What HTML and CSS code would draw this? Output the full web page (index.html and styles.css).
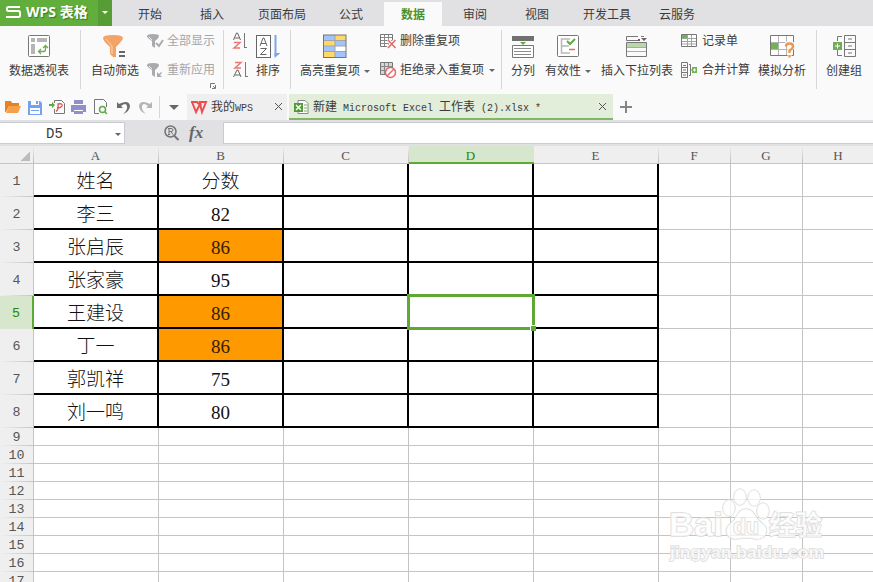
FILE: index.html
```html
<!DOCTYPE html>
<html lang="zh-CN">
<head>
<meta charset="utf-8">
<title>WPS 表格</title>
<link rel="stylesheet" href="styles.css">
</head>
<body>
<div class="app">
  <header class="menubar">
    <div class="brand">
      <svg width="15" height="12" viewBox="0 0 15 12" fill="none" stroke="#fff" stroke-width="2"><path d="M14 1H2.5Q1 1 1 2.5V3.500Q1 5 2.500 5H12.500Q14 5 14 6.500V9.500Q14 11 12.500 11H0"/></svg>
      <span>WPS 表格</span>
    </div>
    <div class="brand-drop"><i class="caret light"></i></div>
    <nav class="menu">
      <a class="w-start">开始</a><a class="w-insert">插入</a><a class="w-layout">页面布局</a><a class="w-formula">公式</a><a class="current">数据</a><a class="w-review">审阅</a><a class="w-view">视图</a><a class="w-dev">开发工具</a><a class="w-cloud">云服务</a>
    </nav>
  </header>

  <section class="ribbon">
    <div class="group g-pivot">
      <div class="tool">
        <svg width="24" height="24" viewBox="0 0 24 24" fill="none"><rect x="1.500" y="1.500" width="21" height="21" rx="1" fill="#fff" stroke="#777"/><path d="M4 4h4v4H4zM10 4h10v4H10zM4 10h4v10H4z" fill="#b5b5b7"/><path d="M12 17.500h4.500Q18.500 17.500 18.500 15.500V12M14 15l-2.500 2.500L14 20M16 14l2.500-2.500L21 14" stroke="#6aad4c" stroke-width="1.300"/></svg>
        <span>数据透视表</span>
      </div>
    </div>
    <div class="group g-filter">
      <div class="tool">
        <svg width="24" height="24" viewBox="0 0 24 24"><path d="M0 4Q0 1 10 1T20 4Q20 6 13 13V23H10L7 20V13Q0 7 0 4Z" fill="#f2a365"/><path d="M3 5l6 7v8" fill="none" stroke="#fbd5b5"/><path d="M16 17h6v2h-6zM16 21h6v2h-6z" fill="#666"/></svg>
        <span>自动筛选</span>
      </div>
      <div class="stack muted">
        <div class="mini"><svg width="17" height="16" viewBox="0 0 17 16"><path d="M0 3Q0 1 6 1T12 3Q12 5 8 8V15L5 13V8Q0 5 0 3Z" fill="#a9aaad"/><path d="M2 4l3 3" stroke="#eee"/><path d="M9 10l3 3 4-6" fill="none" stroke="#a9aaad" stroke-width="2"/></svg><span>全部显示</span></div>
        <div class="mini"><svg width="17" height="16" viewBox="0 0 17 16"><path d="M0 3Q0 1 6 1T12 3Q12 5 8 8V15L5 13V8Q0 5 0 3Z" fill="#a9aaad"/><path d="M2 4l3 3" stroke="#eee"/><path d="M10 10v5h5l-2-2 2-2-1-1-2 2z" fill="#a9aaad"/></svg><span>重新应用</span></div>
      </div>
      <svg class="launcher" width="6" height="6" viewBox="0 0 6 6" fill="none" stroke="#777"><path d="M.5 5V.5H5M5.500 2v3.500H2M3 3l2 2"/></svg>
    </div>
    <div class="group g-sort">
      <div class="stack narrow">
        <svg width="16" height="18" viewBox="0 0 16 18" fill="none"><path d="M1.500 8L4.500 1h1L8.500 8M2.500 6h5" stroke="#666"/><path d="M2 10.500h6l-6 5.500h6" stroke="#ed7777" stroke-width="1.500"/><path d="M12.500 1v15M13 15.500h2" stroke="#777"/></svg>
        <svg width="16" height="18" viewBox="0 0 16 18" fill="none"><path d="M3 1.500h6L3 7h6" stroke="#ed7777" stroke-width="1.500"/><path d="M1.500 16L5 9h1l3 7M3 14h5" stroke="#666"/><path d="M13.500 1v15M14 15.500h2" stroke="#777"/></svg>
      </div>
      <div class="tool">
        <svg width="24" height="24" viewBox="0 0 24 24" fill="none"><rect x=".5" y="1.500" width="14" height="22" fill="#fff" stroke="#666"/><path d="M4 12L7 4h1l3 8M5 9.500h5M4.500 14.500h6l-6 6h6" stroke="#666"/><path d="M19.500 1v21" stroke="#7ea6ec" stroke-width="2"/><path d="M18.500 24v-5h6z" fill="#7ea6ec"/></svg>
        <span>排序</span>
      </div>
    </div>
    <div class="group g-dup">
      <div class="tool">
        <svg width="24" height="24" viewBox="0 0 24 24"><path d="M1 1h22v22H1z" fill="#a3c4fa"/><path d="M12 1h11v5H12zM1 7h11v5H1zM1 18h11v5H1z" fill="#ffd868"/><path d="M12 12h11v5H12z" fill="#fff"/><path d="M1 6.500h22M1 12h22M1 17.500h22M12 1v22" stroke="#a2a5a9" fill="none"/><rect x=".5" y="1" width="22.500" height="22.500" fill="none" stroke="#757575"/></svg>
        <span>高亮重复项<i class="caret"></i></span>
      </div>
      <div class="stack">
        <div class="mini"><svg width="16" height="16" viewBox="0 0 16 16" fill="none"><path d="M.5 1.500h12v12H.5z" fill="#fff" stroke="#777"/><path d="M1 4.500h11M1 7.500h11M1 10.500h11M4.500 2v11M8.500 2v11" stroke="#888"/><path d="M8 7l7.500 8M15.500 7L8 15" stroke="#fafafa" stroke-width="4"/><path d="M8 7l7.500 8M15.500 7L8 15" stroke="#e56767" stroke-width="1.500"/></svg><span>删除重复项</span></div>
        <div class="mini"><svg width="16" height="16" viewBox="0 0 16 16" fill="none"><path d="M.5.500h12v12H.5z" fill="#d6d6d6" stroke="#777"/><path d="M1 4.500h11M1 8.500h11M4.500 1v11M8.500 1v11" stroke="#888"/><circle cx="10.500" cy="10.500" r="5" fill="#fff" stroke="#e56767" stroke-width="1.500"/><path d="M7 14l7-7" stroke="#e56767" stroke-width="1.500"/></svg><span>拒绝录入重复项</span><i class="caret"></i></div>
      </div>
    </div>
    <div class="group g-data">
      <div class="tool">
        <svg width="24" height="24" viewBox="0 0 24 24" fill="none"><path d="M1 2h22v5H1z" fill="#707070"/><path d="M9 8h6l-3 3z" fill="#5faa43"/><path d="M1.500 11.500h21v12h-21z" fill="#fff" stroke="#777"/><path d="M3 14.500h17M3 17.500h17M3 20.500h17" stroke="#8c8c8c"/></svg>
        <span>分列</span>
      </div>
      <div class="tool t-valid">
        <svg width="24" height="24" viewBox="0 0 24 24" fill="none"><rect x="1.500" y="1.500" width="21" height="21" rx="1" fill="#fff" stroke="#777"/><path d="M14 5H5.500v14H14M6 12h7" stroke="#b8b8b8" stroke-width="1.500"/><path d="M11 7l3 3 5-5" stroke="#5faa43" stroke-width="2"/><path d="M13 15.500h6" stroke="#e56767" stroke-width="1.500"/></svg>
        <span>有效性<i class="caret"></i></span>
      </div>
      <div class="tool t-list">
        <svg width="24" height="24" viewBox="0 0 24 24" fill="none"><path d="M13 2.500H1.500v4h12M16 2.500h3M1.500 8.500h20v14h-20z" stroke="#777"/><path d="M2 9h19v4H2z" fill="#b9d7a9"/><path d="M2 13.500h19M2 17.500h19" stroke="#aaa"/><path d="M16 4h6l-3 3zM13 5h2v2h-2z" fill="#666"/></svg>
        <span>插入下拉列表</span>
      </div>
      <div class="stack">
        <div class="mini"><svg width="17" height="16" viewBox="0 0 17 16" fill="none"><path d="M.5 1.500h15v12H.5z" fill="#fff" stroke="#777"/><path d="M1 2h5v3H1z" fill="#6fb354"/><path d="M1 5.500h14M1 8.500h14M1 11h14M6.500 2v11M10.500 2v11" stroke="#a3a3a3"/></svg><span>记录单</span></div>
        <div class="mini"><svg width="17" height="16" viewBox="0 0 17 16" fill="none"><path d="M.5.500h6v15h-6zM1 5.500h5M1 10.500h5" stroke="#777"/><path d="M2 3.500h3M2 8h3M2 13h3M8 2.500h1.500v11H8M9 8h3" stroke="#777"/><path d="M11 5h5v6h-5z" fill="#6fb354"/><path d="M12 8h3M13.500 6.500v3" stroke="#fff"/></svg><span>合并计算</span></div>
      </div>
      <div class="tool t-what">
        <svg width="25" height="24" viewBox="0 0 25 24" fill="none"><path d="M.5 1.500h23v20H.5z" fill="#fff" stroke="#777"/><path d="M1 8.500h22M1 15.500h22M8.500 2v19M16.500 2v19" stroke="#b3b3b3"/><path d="M1 9h7v6H1z" fill="#6fb354"/><path d="M16 12q0-3 3.500-3t3.500 3q0 2-3.500 4v3M19.500 21v3" stroke="#fafafa" stroke-width="4"/><path d="M16 12.500q0-3 3.500-3t3.500 3q0 2-3.500 4v2.500M19.500 21v2.500" stroke="#ef974f" stroke-width="2.400"/></svg>
        <span>模拟分析</span>
      </div>
    </div>
    <div class="group g-create">
      <div class="tool">
        <svg width="24" height="24" viewBox="0 0 24 24" fill="none"><path d="M12.500 1.500h11v21h-11zM13 8.500h10M13 15.500h10M16 5h4M16 12h4M16 19h4M10 2.500H5.500V7M5.500 16v5.500H10" stroke="#777"/><path d="M1 8h9v8H1z" fill="#6fae55"/><path d="M3 12h5M5.500 9.500v5" stroke="#fff"/></svg>
        <span>创建组</span>
      </div>
    </div>
  </section>

  <section class="docbar">
    <div class="quick">
      <svg width="16" height="16" viewBox="0 0 16 16"><path d="M0 2h6l1 2h7v3H4L1 13H0z" fill="#e9821d"/><path d="M4 7h12l-3 7H1z" fill="#f5a04a"/></svg>
      <svg class="q-save" width="14" height="15" viewBox="0 0 14 15"><path d="M0 1h12l2 2v12H0z" fill="#75a1ee"/><path d="M3 1h8v4H3zM2 8h10v6H2z" fill="#fff"/><path d="M8 1h2v3H8zM3 10h8v1H3z" fill="#75a1ee"/></svg>
      <svg class="q-pdf" width="17" height="16" viewBox="0 0 17 16" fill="none"><path d="M5.500 4V1.500h7l3 3v10h-10V10" stroke="#777"/><path d="M0 5h3V3l3 3-3 3V7H0z" fill="#5ca942"/><path d="M7 12.500q3-2 2-7.500 5-1 4 2-1 2-5 2" stroke="#df5555" stroke-width="1.300"/></svg>
      <svg class="q-print" width="15" height="16" viewBox="0 0 15 16"><path d="M3 1h9v4H3zM0 6h15v7h-3v-2H3v2H0zM3 12h9v3H3z" fill="#9090c9"/><path d="M3 5h9v1H3zM4 11h7v1H4z" fill="#fff"/></svg>
      <svg class="q-preview" width="14" height="16" viewBox="0 0 14 16" fill="none"><path d="M5 14.500H.5v-14h9l3 3V8" stroke="#777"/><circle cx="8.500" cy="10.500" r="3" stroke="#61a849" stroke-width="1.500"/><path d="M11 13l2 2" stroke="#61a849" stroke-width="1.500"/></svg>
      <svg class="q-undo" width="13" height="15" viewBox="0 0 13 15"><path d="M0 2v6h6L4 6q5-4 6 0 1 4-4 8 7-3 7-8Q12-1 2 4z" fill="#6c6c6c"/></svg>
      <svg class="q-redo" width="13" height="15" viewBox="0 0 13 15"><path d="M13 2v6H7l2-2Q4 2 3 6q-1 4 4 8-7-3-7-8Q1-1 11 4z" fill="#b4b4b6"/></svg>
      <i class="divider"></i><i class="caret large"></i>
    </div>
    <div class="doc home">
      <svg width="16" height="13" viewBox="0 0 16 13" fill="none" stroke="#ed4e50" stroke-width="2"><path d="M0 1h6l2 2M1 1l4 10 4-8 2 8 4-10H9l1 4"/></svg>
      <span>我的<span class="latin">WPS</span></span>
      <svg class="close" width="9" height="9" viewBox="0 0 9 9" stroke="#555"><path d="M1 0l7 7M8 0L1 7"/></svg>
    </div>
    <div class="doc active">
      <svg width="15" height="15" viewBox="0 0 15 15" fill="none"><path d="M4 .5h7l3 3v10H4z" fill="#fff" stroke="#888"/><path d="M0 3h9v9H0z" fill="#4e9b35"/><path d="M2 5l5 5M7 5l-5 5" stroke="#fff" stroke-width="1.500"/><path d="M10 5h3M10 8h3M10 11h3" stroke="#75ad60"/></svg>
      <span>新建<span class="latin"> Microsoft Excel </span>工作表<span class="latin"> (2).xlsx *</span></span>
      <svg class="close" width="9" height="9" viewBox="0 0 9 9" stroke="#555"><path d="M1 0l7 7M8 0L1 7"/></svg>
    </div>
    <svg class="plus" width="12" height="12" viewBox="0 0 12 12" fill="#858587"><path d="M5 0h2v5h5v2H7v5H5V7H0V5h5z"/></svg>
  </section>

  <section class="formula">
    <div class="namebox"><span>D5</span><i class="caret"></i></div>
    <div class="fx">
      <svg width="15" height="16" viewBox="0 0 15 16" fill="none" stroke="#737373"><circle cx="6.500" cy="6.500" r="5.500" stroke-width="1.500"/><path d="M10.500 11l4 4" stroke-width="2"/><path d="M5 9.500v-6h2q2 0 2 1.500T7 6.500H5M7 6.500l2 3M4 3.500h2M4 9.500h2"/></svg>
      <em>fx</em>
    </div>
    <div class="input"></div>
  </section>

  <main class="sheet">
    <div class="row heads"><b class="corner"></b><b>A</b><b>B</b><b>C</b><b class="picked">D</b><b>E</b><b>F</b><b>G</b><b>H</b></div>
    <div class="row data"><b>1</b><i>姓名</i><i>分数</i><i></i><i></i><i></i><i></i><i></i><i></i></div>
    <div class="row data"><b>2</b><i>李三</i><i>82</i><i></i><i></i><i></i><i></i><i></i><i></i></div>
    <div class="row data"><b>3</b><i>张启辰</i><i class="dup">86</i><i></i><i></i><i></i><i></i><i></i><i></i></div>
    <div class="row data"><b>4</b><i>张家豪</i><i>95</i><i></i><i></i><i></i><i></i><i></i><i></i></div>
    <div class="row data"><b class="picked">5</b><i>王建设</i><i class="dup">86</i><i></i><i class="cursor"></i><i></i><i></i><i></i><i></i></div>
    <div class="row data"><b>6</b><i>丁一</i><i class="dup">86</i><i></i><i></i><i></i><i></i><i></i><i></i></div>
    <div class="row data"><b>7</b><i>郭凯祥</i><i>75</i><i></i><i></i><i></i><i></i><i></i><i></i></div>
    <div class="row data"><b>8</b><i>刘一鸣</i><i>80</i><i></i><i></i><i></i><i></i><i></i><i></i></div>
    <div class="row"><b>9</b><i></i><i></i><i></i><i></i><i></i><i></i><i></i><i></i></div>
    <div class="row"><b>10</b><i></i><i></i><i></i><i></i><i></i><i></i><i></i><i></i></div>
    <div class="row"><b>11</b><i></i><i></i><i></i><i></i><i></i><i></i><i></i><i></i></div>
    <div class="row"><b>12</b><i></i><i></i><i></i><i></i><i></i><i></i><i></i><i></i></div>
    <div class="row"><b>13</b><i></i><i></i><i></i><i></i><i></i><i></i><i></i><i></i></div>
    <div class="row"><b>14</b><i></i><i></i><i></i><i></i><i></i><i></i><i></i><i></i></div>
    <div class="row"><b>15</b><i></i><i></i><i></i><i></i><i></i><i></i><i></i><i></i></div>
    <div class="row"><b>16</b><i></i><i></i><i></i><i></i><i></i><i></i><i></i><i></i></div>
    <div class="row"><b>17</b><i></i><i></i><i></i><i></i><i></i><i></i><i></i><i></i></div>
  </main>

  <svg class="watermark" width="165" height="84" viewBox="0 0 165 84">
    <g class="paw"><ellipse cx="85" cy="12" rx="6" ry="8"/><ellipse cx="99" cy="13" rx="6" ry="8"/><ellipse cx="74" cy="23" rx="6" ry="8"/><ellipse cx="108" cy="26" rx="6" ry="8"/><path d="M91 24C82 24 83 33 76 38C68 44 71 54 81 54Q91 52 101 54C112 54 115 44 107 38C99 33 100 24 91 24Z"/></g>
    <text class="name" x="14" y="51" textLength="54" lengthAdjust="spacingAndGlyphs">Bai</text>
    <text class="du" x="78" y="49" textLength="26" lengthAdjust="spacingAndGlyphs">du</text>
    <text class="cn" x="114" y="50" textLength="53" lengthAdjust="spacingAndGlyphs">经验</text>
    <text class="url" x="15" y="73" textLength="154" lengthAdjust="spacingAndGlyphs">jingyan.baidu.com</text>
  </svg>
</div>
</body>
</html>
```
FILE: styles.css
```css
*, *::before, *::after { box-sizing: border-box; }
body { margin: 0; }
.app {
  position: relative;
  width: 873px;
  height: 582px;
  overflow: hidden;
  display: flex;
  flex-direction: column;
  background: #fff;
  color: #3b3b3b;
  font: 12px/16px "Liberation Sans", "Noto Sans CJK SC", sans-serif;
  white-space: nowrap;
}
svg { display: block; flex: none; overflow: visible; }
.caret {
  display: block;
  flex: none;
  border: 3px solid transparent;
  border-top-color: #666;
  border-bottom: 0;
}
.caret.light { border-top-color: #fff; }
.caret.large { border-width: 5px 5px 0; }

/* menu */
.menubar { display: flex; flex: none; height: 26px; background: #e1e1e4; }
.brand {
  display: flex;
  align-items: center;
  gap: 5px;
  width: 98px;
  padding: 0 0 2px 6px;
  background: #61ae3d;
  color: #fff;
  font: bold 14px/18px "Open Sans", "Noto Sans CJK SC", sans-serif;
  text-shadow: 1px 1px 1px #397a1d;
}
.brand-drop { display: flex; width: 14px; justify-content: center; padding-top: 11px; background: #579d36; }
.menu { display: flex; padding-left: 26px; }
.menu a { padding-top: 7px; height: 26px; }
.w-start { width: 62px; }
.w-insert { width: 58px; }
.w-layout { width: 81px; }
.w-formula { width: 45px; }
.menu .current {
  width: 58px;
  height: 24px;
  margin-top: 2px;
  padding-top: 5px;
  text-align: center;
  background: #fafafa;
  color: #4b9227;
  font-weight: bold;
}
.w-review { width: 83px; padding-left: 21px; }
.w-view { width: 58px; }
.w-dev { width: 76px; }

/* ribbon */
.ribbon { display: flex; flex: none; height: 68px; padding-top: 4px; background: #fafafa; }
.group { position: relative; display: flex; height: 59px; padding-top: 2px; border-right: 1px solid #d7d7da; }
.group:last-child { border: 0; }
.g-pivot { width: 81px; padding-left: 9px; }
.g-filter { width: 143px; padding-left: 10px; gap: 8px; }
.g-sort { width: 67px; padding-left: 8px; gap: 8px; }
.g-dup { width: 211px; padding-left: 9px; gap: 10px; }
.g-data { width: 315px; padding-left: 9px; }
.g-create { padding-left: 9px; }
.tool { display: flex; flex-direction: column; align-items: center; padding-top: 2px; }
.tool > span { display: flex; align-items: center; margin-top: 3px; line-height: 20px; }
.tool > span .caret { margin-left: 4px; }
.t-valid { margin-left: 10px; }
.t-list { margin-left: 10px; }
.t-what { margin-left: 8px; }
.t-list + .stack { margin-left: 8px; }
.stack { display: flex; flex-direction: column; padding-top: 1px; gap: 13px; }
.stack.narrow { padding-top: 0; gap: 11px; }
.mini { display: flex; align-items: center; height: 16px; gap: 4px; }
.mini .caret { margin-left: 1px; }
.g-filter .mini { gap: 3px; }
.muted { color: #a5a5a8; }
.launcher { position: absolute; right: 7px; bottom: 0; }

/* open documents */
.docbar { display: flex; flex: none; height: 26px; background: #fafafa; }
.quick { display: flex; align-items: center; width: 187px; padding-left: 5px; }
.q-save { margin-left: 7px; }
.q-pdf { margin-left: 7px; }
.q-print { margin-left: 5px; }
.q-preview { margin-left: 8px; }
.q-undo { margin-left: 9px; }
.q-redo { margin-left: 9px; }
.divider { width: 1px; height: 22px; margin: 0 9px 0 7px; background: #d7d7da; }
.doc { display: flex; align-items: center; }
.home { width: 100px; padding: 1px 4px 0 4px; gap: 4px; background: #efeff0; }
.active { width: 324px; margin-left: 2px; padding: 3px 6px 0 5px; gap: 4px; background: #e2edda; border-bottom: 2px solid #82b566; }
.close { margin-left: auto; }
.latin { font: 10px/14px "Liberation Mono", monospace; white-space: pre; }
.plus { margin: 7px 0 0 7px; }

/* formula bar */
.formula { display: flex; flex: none; height: 26px; padding: 2px 0; background: #e1e1e4; }
.namebox, .input { background: #fff; border: solid #cacad1; border-width: 1px 0; }
.namebox { display: flex; align-items: center; width: 125px; padding: 2px 3px 0 46px; border-right-width: 1px; justify-content: space-between; font: 14px/18px "Liberation Mono", monospace; }
.fx { display: flex; align-items: center; gap: 10px; width: 98px; padding-left: 39px; }
.fx em { color: #666; font: italic bold 17px/18px "Liberation Serif", serif; }
.input { flex: 1; border-left-width: 1px; }

/* grid */
.sheet { flex: none; }
.row { display: grid; grid-template: 100% / 34px repeat(5, 125px) repeat(3, 72px); height: 18px; }
.row b {
  display: flex;
  align-items: center;
  justify-content: center;
  padding-top: 1px;
  background: linear-gradient(90deg, #efefef, #c4c4c4) 0 100% / 100% 1px no-repeat #efefef;
  border-right: 1px solid #c4c4c4;
  color: #555;
  font: 13.300px/15px "Liberation Mono", monospace;
}
.row i {
  display: flex;
  align-items: center;
  justify-content: center;
  border: solid #c4c4c4;
  border-width: 0 1px 1px 0;
  color: #111;
  font: 300 19px/24px "Liberation Serif", "Noto Sans CJK SC", serif;
}
.heads b {
  padding: 3px 2px 0 0;
  border: 0;
  background: linear-gradient(#efefef, #bdbdbd) 100% 0 / 1px 100% no-repeat #efefef;
  border-bottom: 1px solid #c4c4c4;
  font: 13px/14px "Liberation Serif", serif;
}
.heads .corner::after {
  content: "";
  width: 9px;
  height: 9px;
  margin-left: 19px;
  background: linear-gradient(135deg, transparent 50%, #bcbcbc 50%);
}
.heads .picked { background: #d6e7ce; border-bottom: 2px solid #5ea935; color: #278500; }
.data { height: 33px; }
.data i { padding-top: 5px; }
.data i:nth-child(-n+6) { border-color: #000; border-width: 0 2px 2px 0; }
.data .dup { background: #ff9900; color: #332000; }
.data .picked { background: #d6e7ce; border-right: 2px solid #5ea935; color: #278500; }
.cursor { position: relative; }
.cursor::before { content: ""; position: absolute; left: -2px; top: -2px; width: 128px; height: 36px; border: 3px solid #5ea935; z-index: 1; }
.cursor::after { content: ""; position: absolute; left: 121px; top: 29px; width: 6px; height: 6px; border: solid #fff; border-width: 1px 0 0 1px; background: #5ea935; z-index: 2; }

/* watermark */
.watermark { position: absolute; left: 655px; top: 485px; fill: #fff; fill-opacity: .75; stroke: #dcdcdc; stroke-width: 1.500px; paint-order: stroke; }
.name { font: bold 34px "Liberation Sans", sans-serif; }
.du { font: bold 22px "Liberation Sans", sans-serif; }
.cn { font: bold 27px "Noto Sans CJK SC", sans-serif; }
.url { font: 600 16px "Liberation Sans", sans-serif; }
```
